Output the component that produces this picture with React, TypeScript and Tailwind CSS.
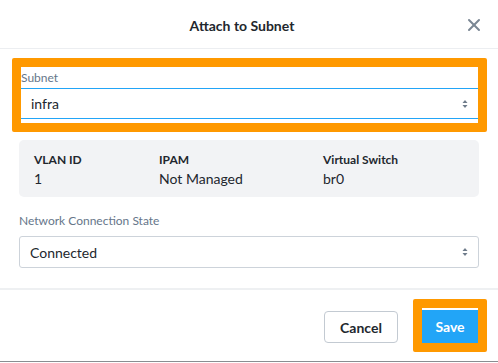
import { X } from 'lucide-react'

function SelectArrows() {
    return (
        <svg width="6" height="10" viewBox="0 0 6 10" className="text-[#6e7b8a]">
            <path d="M3 1 L5.5 4 H0.5 Z" fill="currentColor" />
            <path d="M3 9 L5.5 6 H0.5 Z" fill="currentColor" />
        </svg>
    )
}

export default function App() {
    return (
        <div className="relative h-[363px] w-[498px] overflow-hidden bg-white font-['Lato',sans-serif] text-[#22272e]">
            <div className="flex h-[362px] flex-col border-b border-[#8a8d91]">
                {/* header */}
                <div className="relative flex h-[49px] shrink-0 items-center justify-center border-b border-[#eceef1] pr-[14px]">
                    <h2 className="pt-[3px] text-[14px] font-bold">Attach to Subnet</h2>
                    <button className="absolute right-[14px] top-[15px] text-[#7b8794]">
                        <X size={20} strokeWidth={2.4} />
                    </button>
                </div>

                {/* body */}
                <div className="flex-1">
                    <div className="ml-[12px] mr-[11px] mt-[9px] rounded-[2px] border-[9px] border-[#ff9900] bg-white pb-[4px]">
                        <div className="flex h-[21px] items-center text-[12px] leading-none text-[#66768a]">Subnet</div>
                        <div className="flex h-[31px] items-center justify-between border-y border-[#22a5f7] pl-[10px] pr-[10px] text-[14px]">
                            <span>infra</span>
                            <SelectArrows />
                        </div>
                    </div>

                    <div className="mx-[19px] mt-[8px] grid h-[57px] grid-cols-[125px_164px_1fr] content-start gap-y-[2px] rounded-[5px] bg-[#f2f3f5] pl-[15px] pt-[12px]">
                        <div className="text-[12px] font-bold leading-[16px]">VLAN ID</div>
                        <div className="text-[12px] font-bold leading-[16px]">IPAM</div>
                        <div className="text-[12px] font-bold leading-[16px]">Virtual Switch</div>
                        <div className="text-[14px] leading-[18px]">1</div>
                        <div className="text-[14px] leading-[18px]">Not Managed</div>
                        <div className="text-[14px] leading-[18px]">br0</div>
                    </div>

                    <div className="mx-[19px] mt-[16px]">
                        <label className="block text-[12px] leading-[16px] text-[#66768a]">Network Connection State</label>
                        <div className="mt-[7px] flex h-[32px] items-center justify-between rounded-[3px] border border-[#cdd3da] pl-[10px] pr-[10px] text-[14px]">
                            <span>Connected</span>
                            <SelectArrows />
                        </div>
                    </div>
                </div>

                {/* footer */}
                <div className="flex h-[73px] shrink-0 items-start justify-end gap-[15px] border-t-2 border-[#eef0f2] pr-[11px] pt-[9px]">
                    <button className="mt-[12px] flex h-[32px] w-[74px] items-center justify-center rounded-[4px] border border-[#c3cad2] text-[14px] font-bold">
                        Cancel
                    </button>
                    <div className="rounded-[2px] border-[9px] border-[#ff9900]">
                        <div className="h-[2px] w-[56px] bg-white" />
                        <button className="flex h-[33px] w-[56px] items-center justify-center bg-[#22a5f7] text-[14px] font-bold text-white">
                            Save
                        </button>
                    </div>
                </div>
            </div>
        </div>
    )
}
